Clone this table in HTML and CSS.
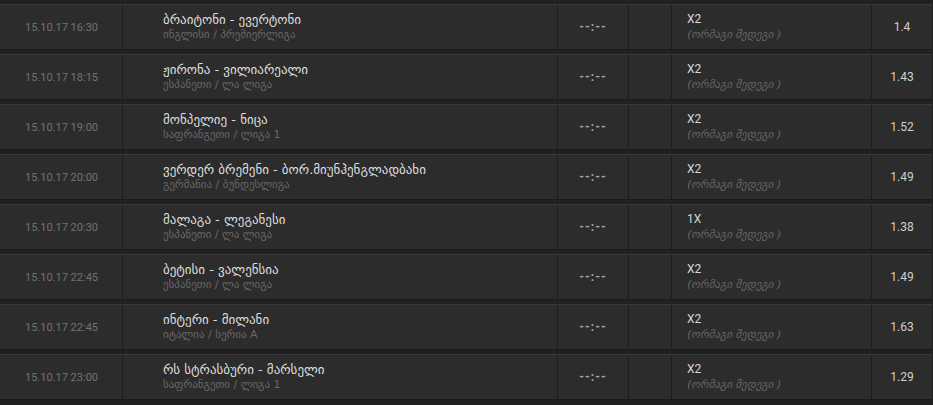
FILE: index.html
```html
<!DOCTYPE html>
<html lang="ka">

<head>
    <meta charset="UTF-8">
    <meta name="viewport" content="width=device-width, initial-scale=1.0">
    <title>Bets</title>

    <link rel="stylesheet" href="styles.css">

</head>

<body>
    <div class="bets">
        <div class="bet-row">
            <div class="cell date">15.10.17 16:30</div>
            <div class="cell match">
                <div class="teams">ბრაიტონი - ევერტონი</div>
                <div class="league">ინგლისი / პრემიერლიგა</div>
            </div>
            <div class="cell score">--:--</div>
            <div class="cell empty"></div>
            <div class="cell pick">
                <div class="pick-name">X2</div>
                <div class="pick-desc">(ორმაგი შედეგი )</div>
            </div>
            <div class="cell odds">1.4</div>
        </div>

        <div class="bet-row">
            <div class="cell date">15.10.17 18:15</div>
            <div class="cell match">
                <div class="teams">ჟირონა - ვილიარეალი</div>
                <div class="league">ესპანეთი / ლა ლიგა</div>
            </div>
            <div class="cell score">--:--</div>
            <div class="cell empty"></div>
            <div class="cell pick">
                <div class="pick-name">X2</div>
                <div class="pick-desc">(ორმაგი შედეგი )</div>
            </div>
            <div class="cell odds">1.43</div>
        </div>

        <div class="bet-row">
            <div class="cell date">15.10.17 19:00</div>
            <div class="cell match">
                <div class="teams">მონპელიე - ნიცა</div>
                <div class="league">საფრანგეთი / ლიგა 1</div>
            </div>
            <div class="cell score">--:--</div>
            <div class="cell empty"></div>
            <div class="cell pick">
                <div class="pick-name">X2</div>
                <div class="pick-desc">(ორმაგი შედეგი )</div>
            </div>
            <div class="cell odds">1.52</div>
        </div>

        <div class="bet-row">
            <div class="cell date">15.10.17 20:00</div>
            <div class="cell match">
                <div class="teams">ვერდერ ბრემენი - ბორ.მიუნჰენგლადბახი</div>
                <div class="league">გერმანია / ბუნდესლიგა</div>
            </div>
            <div class="cell score">--:--</div>
            <div class="cell empty"></div>
            <div class="cell pick">
                <div class="pick-name">X2</div>
                <div class="pick-desc">(ორმაგი შედეგი )</div>
            </div>
            <div class="cell odds">1.49</div>
        </div>

        <div class="bet-row">
            <div class="cell date">15.10.17 20:30</div>
            <div class="cell match">
                <div class="teams">მალაგა - ლეგანესი</div>
                <div class="league">ესპანეთი / ლა ლიგა</div>
            </div>
            <div class="cell score">--:--</div>
            <div class="cell empty"></div>
            <div class="cell pick">
                <div class="pick-name">1X</div>
                <div class="pick-desc">(ორმაგი შედეგი )</div>
            </div>
            <div class="cell odds">1.38</div>
        </div>

        <div class="bet-row">
            <div class="cell date">15.10.17 22:45</div>
            <div class="cell match">
                <div class="teams">ბეტისი - ვალენსია</div>
                <div class="league">ესპანეთი / ლა ლიგა</div>
            </div>
            <div class="cell score">--:--</div>
            <div class="cell empty"></div>
            <div class="cell pick">
                <div class="pick-name">X2</div>
                <div class="pick-desc">(ორმაგი შედეგი )</div>
            </div>
            <div class="cell odds">1.49</div>
        </div>

        <div class="bet-row">
            <div class="cell date">15.10.17 22:45</div>
            <div class="cell match">
                <div class="teams">ინტერი - მილანი</div>
                <div class="league">იტალია / სერია A</div>
            </div>
            <div class="cell score">--:--</div>
            <div class="cell empty"></div>
            <div class="cell pick">
                <div class="pick-name">X2</div>
                <div class="pick-desc">(ორმაგი შედეგი )</div>
            </div>
            <div class="cell odds">1.63</div>
        </div>

        <div class="bet-row">
            <div class="cell date">15.10.17 23:00</div>
            <div class="cell match">
                <div class="teams">რს სტრასბური - მარსელი</div>
                <div class="league">საფრანგეთი / ლიგა 1</div>
            </div>
            <div class="cell score">--:--</div>
            <div class="cell empty"></div>
            <div class="cell pick">
                <div class="pick-name">X2</div>
                <div class="pick-desc">(ორმაგი შედეგი )</div>
            </div>
            <div class="cell odds">1.29</div>
        </div>
    </div>
</body>

</html>
```

FILE: styles.css
```css
* {
    margin: 0;
    padding: 0;
    box-sizing: border-box;
}

body {
    background-color: #212121;
    font-family: Roboto, "DejaVu Sans", sans-serif;
    overflow: hidden;
}

.bets {
    padding-top: 4px;
}

.bet-row {
    display: flex;
    height: 46px;
    margin-bottom: 4px;
    background-color: #2c2c2c;
    border-top: 1px solid #383838;
    border-bottom: 1px solid #1a1a1a;
    width: 932px;
}

.cell {
    border-right: 1px solid #1c1c1c;
    display: flex;
    align-items: center;
}

.date {
    width: 123px;
    justify-content: center;
    color: #727272;
    font-size: 11px;
    padding-left: 1px;
}

.match {
    width: 435px;
    flex-direction: column;
    align-items: flex-start;
    justify-content: center;
    padding-left: 40px;
}

.teams {
    font-family: "DejaVu Sans", sans-serif;
    font-size: 13px;
    color: #dedede;
    line-height: 15px;
}

.league {
    font-family: "DejaVu Sans", sans-serif;
    font-size: 11px;
    color: #686868;
    line-height: 15px;
}

.score {
    width: 71px;
    justify-content: center;
    color: #a8a8a8;
    font-size: 12px;
    font-weight: bold;
    letter-spacing: 1px;
}

.empty {
    width: 43px;
}

.pick {
    width: 200px;
    flex-direction: column;
    align-items: flex-start;
    justify-content: center;
    padding-left: 15px;
}

.pick-name {
    color: #d6d6d6;
    font-size: 12px;
    line-height: 15px;
}

.pick-desc {
    font-family: "DejaVu Sans", sans-serif;
    font-style: italic;
    color: #666666;
    font-size: 11px;
    line-height: 15px;
}

.odds {
    width: 60px;
    justify-content: center;
    color: #cfcfcf;
    font-size: 12px;
    border-right: none;
}
```
